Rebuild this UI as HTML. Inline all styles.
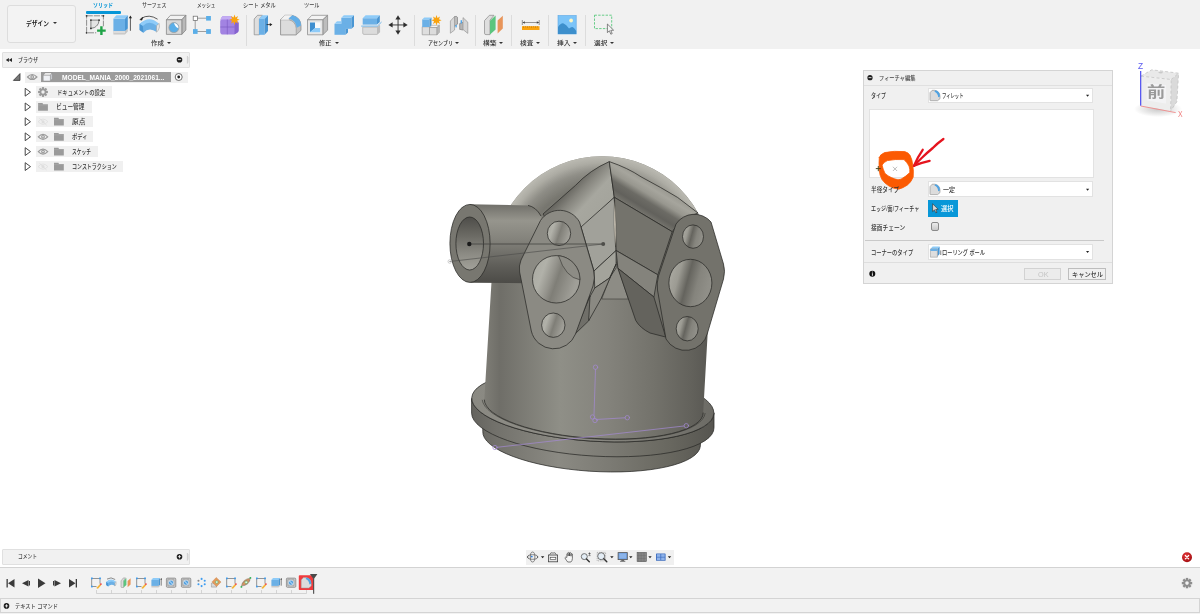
<!DOCTYPE html>
<html lang="ja"><head><meta charset="utf-8"><title>Fusion 360</title>
<style>
html,body{margin:0;padding:0;}
body{width:1200px;height:614px;overflow:hidden;background:#fff;position:relative;font-family:"Liberation Sans","Noto Sans CJK JP",sans-serif;}
.abs{position:absolute;}
.t{position:absolute;white-space:nowrap;transform-origin:0 50%;display:inline-block;}
#toolbar{position:absolute;left:0;top:0;width:1200px;height:49.4px;background:#f1f1f1;}
#design{position:absolute;left:7px;top:5px;width:67px;height:36px;border:1px solid #dddddd;border-radius:3px;background:#f3f3f3;}
.tabline{position:absolute;left:86.3px;top:11.4px;width:35.2px;height:2.2px;border-radius:1.1px;background:#0696d7;}
.vsep{position:absolute;top:15px;width:1px;height:31px;background:#dcdcdc;}
.arr{position:absolute;width:0;height:0;border-left:2px solid transparent;border-right:2px solid transparent;border-top:2.5px solid #333;}
.panelhdr{position:absolute;background:#f1f1f1;border:1px solid #e0e0e0;border-radius:1px;box-sizing:border-box;}
.rowbg{position:absolute;background:#f0f0f0;}
#dialog{position:absolute;left:863px;top:70px;width:250px;height:214.3px;background:#f0f0f0;border:1px solid #d4d4d4;box-sizing:border-box;}
.dd{position:absolute;background:#fff;border:1px solid #e2e2e2;box-sizing:border-box;}
.btn{position:absolute;background:#f0f0f0;border:1px solid #bdbdbd;box-sizing:border-box;}
#timeline{position:absolute;left:0;top:567px;width:1200px;height:47px;background:#f2f2f2;border-top:1.4px solid #d3d3d3;box-sizing:border-box;}
#textcmd{position:absolute;left:0;top:598px;width:1200px;height:15.2px;background:#f2f2f2;border:1px solid #d4d4d4;box-sizing:border-box;}

</style></head>
<body>
<div id="toolbar">
  <div id="design"></div>
  <div class="arr" style="left:53px;top:22px;"></div>
  <div class="tabline"></div>
  <div class="vsep" style="left:246px;"></div>
  <div class="vsep" style="left:414px;"></div>
  <div class="vsep" style="left:475px;"></div>
  <div class="vsep" style="left:511px;"></div>
  <div class="vsep" style="left:548px;"></div>
  <div class="vsep" style="left:585px;"></div>
  <div class="arr" style="left:166.5px;top:42px;"></div>
  <div class="arr" style="left:334.5px;top:42px;"></div>
  <div class="arr" style="left:455px;top:42px;"></div>
  <div class="arr" style="left:499px;top:42px;"></div>
  <div class="arr" style="left:535.5px;top:42px;"></div>
  <div class="arr" style="left:572.5px;top:42px;"></div>
  <div class="arr" style="left:609.5px;top:42px;"></div>
  <svg class="abs" style="left:0;top:0;pointer-events:none" width="640" height="49" viewBox="0 0 640 49">
<defs>
  <linearGradient id="tbBlueF" x1="0" y1="0" x2="0" y2="1"><stop offset="0" stop-color="#6fb4e8"/><stop offset="1" stop-color="#64abe2"/></linearGradient>
</defs>
<!-- sketch -->
<g>
  <rect x="86.6" y="15.8" width="16.8" height="17" fill="none" stroke="#5a5a5a" stroke-width="0.65" stroke-dasharray="6.2 1"/>
  <g fill="#333"><circle cx="86.6" cy="15.8" r="0.9"/><circle cx="103.4" cy="15.8" r="0.9"/><circle cx="86.6" cy="32.8" r="0.9"/></g>
  <path d="M90.9,20.1 L99.1,20.1 Q98.6,27.6 90.9,28.4 Z" fill="#e4e4e4" stroke="#555" stroke-width="0.7"/>
  <g fill="#333"><circle cx="90.9" cy="20.1" r="0.9"/><circle cx="99.1" cy="20.1" r="0.9"/><circle cx="90.9" cy="28.4" r="0.9"/></g>
  <rect x="96.2" y="26.4" width="10.6" height="8.6" fill="#f0f0f0"/>
  <path d="M100.2,26.3 h2.4 v3.1 h3.1 v2.4 h-3.1 v3.1 h-2.4 v-3.1 h-3.1 v-2.4 h3.1 Z" fill="#1fa347"/>
</g>
<!-- extrude -->
<g>
  <path d="M113.4,31 L125,31 L127.8,28.6 L127.8,31.6 L125,34.4 L113.4,34.4 Z" fill="#c6c6c6"/>
  <rect x="113.4" y="31" width="11.6" height="2.2" fill="#dcdcdc"/>
  <rect x="113.4" y="18.6" width="11.6" height="12.4" fill="#6bb0e6"/>
  <path d="M113.4,18.6 L116.4,15.3 L127.8,15.3 L125,18.6 Z" fill="#8ecbf8"/>
  <path d="M125,18.6 L127.8,15.3 L127.8,28.6 L125,31 Z" fill="#4a96d3"/>
  <line x1="130.4" y1="17.5" x2="130.4" y2="30.8" stroke="#333" stroke-width="0.8"/>
  <path d="M130.4,15.6 L132,18.2 L128.8,18.2 Z" fill="#222"/>
</g>
<!-- revolve -->
<g>
  <path d="M139.6,24 Q149,16.5 158.6,24 L156.8,32 Q149,26.5 143.4,32.8 L139.6,30 Z" fill="#6bb0e6"/>
  <path d="M139.6,24 Q149,14.5 158.8,23.6 L156.6,25.8 Q149,19.6 142.8,26 Z" fill="#8ecbf8"/>
  <path d="M139.6,24 L142.8,26 L143.4,32.8 L139.6,30 Z" fill="#4a96d3"/>
  <path d="M156.6,25.6 L159.2,23.4 Q160.2,27 158.2,30.6 L156.4,32.2 Z" fill="#e8e8e8" stroke="#999" stroke-width="0.5"/>
  <path d="M141.2,18.4 Q149,13.6 157.6,19.2" fill="none" stroke="#333" stroke-width="0.8"/>
  <path d="M139.8,19.6 L143,17.2 L141.8,20.2 Z" fill="#222" stroke="#222" stroke-width="0.5"/>
</g>
<!-- hole -->
<g stroke="#7d7d7d" stroke-width="0.7" stroke-linejoin="round">
  <path d="M166.4,19.8 L170.5,15.3 L185.9,15.3 L181.8,19.8 Z" fill="#f2f2f2"/>
  <path d="M181.8,19.8 L185.9,15.3 L185.9,30 L181.8,34.4 Z" fill="#b9b9b9"/>
  <rect x="166.4" y="19.8" width="15.4" height="14.6" fill="#d8d8d8"/>
  <circle cx="173.9" cy="27.6" r="5" fill="#5aaee8" stroke="#a0a0a0" stroke-width="0.8"/>
  <path d="M174,23 A4.6 4.6 0 0 1 178.4,28.2 Q175,27 174,23 Z" fill="#fff" stroke="none"/>
</g>
<!-- pattern -->
<g>
  <path d="M195.2,18.2 H208.5 M195.2,18.2 V31.5 M195.2,31.5 H208.5" fill="none" stroke="#7a7a7a" stroke-width="0.7"/>
  <rect x="193.2" y="16.2" width="4.2" height="4.2" fill="#fff" stroke="#666" stroke-width="0.7"/>
  <rect x="206.1" y="16" width="4.8" height="4.6" fill="#5aaee8"/>
  <rect x="193" y="29.1" width="4.6" height="4.8" fill="#5aaee8"/>
  <rect x="206.1" y="29.1" width="4.8" height="4.8" fill="#5aaee8"/>
</g>
<!-- form -->
<g>
  <path d="M222.5,16.2 H231 L238.6,22 V30.5 Q238.6,32 236.8,33 L234,34.6 H223 Q220.2,34.6 220.2,31.8 V21.5 Q220.2,18 222.5,16.2 Z" fill="#a283e2"/>
  <path d="M222.5,16.2 H231.5 L233.5,19.5 H222 Q220.6,19.5 220.3,21 Q220.4,17.8 222.5,16.2 Z" fill="#c3acf3"/>
  <path d="M234.5,21 L238.6,23 V30.5 Q238.6,32 236.8,33 L234.5,34.4 Z" fill="#8663cf"/>
  <path d="M227.3,19.5 V34.4 M220.3,27 H234.5" stroke="#7a58c0" stroke-width="0.6" fill="none"/>
  <path d="M234.5,14.6 L235.5,17.6 L238,16 L237,18.8 L239.6,19.8 L237,20.8 L238,23.6 L235.5,22 L234.5,25 L233.5,22 L231,23.6 L232,20.8 L229.4,19.8 L232,18.8 L231,16 L233.5,17.6 Z" fill="#f9a30f"/>
</g>
<!-- press pull -->
<g>
  <path d="M254.2,19 L257.5,15.3 L262.5,15.3 L259.4,19 L259.4,34.8 L254.2,34.8 Z" fill="#dedede" stroke="#8a8a8a" stroke-width="0.7" stroke-linejoin="round"/>
  <rect x="259" y="19" width="5.6" height="15.8" fill="#6bb0e6"/>
  <path d="M259,19 L262.2,15.3 L268,15.3 L264.6,19 Z" fill="#8ecbf8"/>
  <path d="M264.6,19 L268,15.3 L268,31 L264.6,34.8 Z" fill="#4a96d3"/>
  <line x1="266.6" y1="24.6" x2="270.6" y2="24.6" stroke="#222" stroke-width="0.8"/>
  <path d="M272.4,24.6 L269.8,23 L269.8,26.2 Z" fill="#222"/>
</g>
<!-- fillet -->
<g stroke-linejoin="round">
  <path d="M280.6,19.5 L284.8,15.3 L292,15.3 Q300.8,17.5 301,25.5 L301,30.4 L296.2,34.8 L280.6,34.8 Z" fill="#c2c2c2" stroke="#858585" stroke-width="0.7"/>
  <path d="M280.6,19.8 L289,19.8 Q295.8,21.5 296.2,28.5 L296.2,34.8 L280.6,34.8 Z" fill="#dcdcdc" stroke="#858585" stroke-width="0.5"/>
  <path d="M280.6,19.8 L284.8,15.3 L292.4,15.3 L288.6,18.6 L289,19.8 Z" fill="#f2f2f2"/>
  <path d="M288.6,18.6 L292.4,15.3 Q300.6,17.4 301,25.4 L296.8,27.8 Q296,20.6 288.6,18.6 Z" fill="#62aee8"/>
</g>
<!-- shell -->
<g stroke="#858585" stroke-width="0.7" stroke-linejoin="round">
  <path d="M307.5,19.8 L311.8,15.3 L327.6,15.3 L322.8,19.8 Z" fill="#f4f4f4"/>
  <path d="M322.8,19.8 L327.6,15.3 L327.6,30.2 L322.8,34.8 Z" fill="#bdbdbd"/>
  <rect x="307.5" y="19.8" width="15.3" height="15" fill="#e6e6e6"/>
  <rect x="310" y="22.4" width="10.4" height="10" fill="#fafafa" stroke="none"/>
  <path d="M310,22.6 L315,22.6 L315,28.2 L310,32.2 Z" fill="#3f8fd0" stroke="none"/>
  <path d="M310,32.2 L315,28 L320.2,28 L320.2,32.2 Z" fill="#8ecbf8" stroke="none"/>
</g>
<!-- combine -->
<g>
  <rect x="341.3" y="17.8" width="10.2" height="11" fill="#6bb0e6"/>
  <path d="M341.3,17.8 L343.8,15.3 L354,15.3 L351.5,17.8 Z" fill="#8ecbf8"/>
  <path d="M351.5,17.8 L354,15.3 L354,26.4 L351.5,28.8 Z" fill="#4a96d3"/>
  <rect x="334.5" y="23.8" width="11" height="11" fill="#6bb0e6"/>
  <path d="M334.5,23.8 L337,21.3 L341.3,21.3 L341.3,23.8 Z" fill="#8ecbf8"/>
  <path d="M345.5,28.8 L348,28.8 L348,32.4 L345.5,34.8 Z" fill="#4a96d3"/>
</g>
<!-- split -->
<g>
  <path d="M362.7,27.2 L377,27.2 L379.6,25.4 L379.6,32.2 L377,34.4 L364,34.4 Q362.7,34.4 362.7,33 Z" fill="#dcdcdc" stroke="#a5a5a5" stroke-width="0.6"/>
  <path d="M377,27.2 L379.6,25.4 L379.6,32.2 L377,34.4 Z" fill="#bdbdbd"/>
  <rect x="362.7" y="18.2" width="14.3" height="6.4" fill="#6bb0e6"/>
  <path d="M362.7,18.2 L365.6,15.3 L379.8,15.3 L377,18.2 Z" fill="#8ecbf8"/>
  <path d="M377,18.2 L379.8,15.3 L379.8,22 L377,24.6 Z" fill="#4a96d3"/>
  <path d="M361.2,26.1 L377.4,26.1 L381.6,22" fill="none" stroke="#62aee8" stroke-width="0.9"/>
</g>
<!-- move -->
<g fill="#2e2e2e">
  <rect x="397.6" y="17.5" width="0.9" height="15" />
  <rect x="390.5" y="24.5" width="15" height="0.9" />
  <path d="M398,15.3 L400.6,19.4 L395.4,19.4 Z"/>
  <path d="M398,34.8 L400.6,30.6 L395.4,30.6 Z"/>
  <path d="M388.4,24.9 L392.6,22.3 L392.6,27.5 Z"/>
  <path d="M407.7,24.9 L403.4,22.3 L403.4,27.5 Z"/>
</g>
<!-- assembly -->
<g stroke-linejoin="round">
  <path d="M422.2,26.8 L429.5,26.8 L429.5,34.8 L422.2,34.8 Z" fill="#dedede" stroke="#909090" stroke-width="0.6"/>
  <path d="M429.5,27.5 L432,25.3 L439.4,25.3 L437,27.5 Z" fill="#f2f2f2" stroke="#909090" stroke-width="0.5"/>
  <path d="M429.5,27.5 L437,27.5 L437,34.8 L429.5,34.8 Z" fill="#dcdcdc" stroke="#909090" stroke-width="0.6"/>
  <path d="M437,27.5 L439.4,25.3 L439.4,32.4 L437,34.8 Z" fill="#b9b9b9" stroke="#909090" stroke-width="0.5"/>
  <rect x="422.2" y="19.4" width="7.3" height="7.6" fill="#6bb0e6"/>
  <path d="M422.2,19.4 L424.2,17.5 L431.5,17.5 L429.5,19.4 Z" fill="#8ecbf8"/>
  <path d="M429.5,19.4 L431.5,17.5 L431.5,25.2 L429.5,27 Z" fill="#4a96d3"/>
  <path d="M436.5,15 L437.5,18 L440,16.4 L439,19.2 L441.6,20.2 L439,21.2 L440,24 L437.5,22.4 L436.5,25.4 L435.5,22.4 L433,24 L434,21.2 L431.4,20.2 L434,19.2 L433,16.4 L435.5,18 Z" fill="#f9a30f" stroke="none"/>
</g>
<!-- joint -->
<g stroke="#8a8a8a" stroke-width="0.6" stroke-linejoin="round">
  <path d="M450.4,21 L454.5,16.6 Q456.5,15.8 457.5,17.4 L457.5,24 L454.6,26 L454.6,30 L450.4,33.2 Z" fill="#d9d9d9"/>
  <path d="M454.5,16.6 Q456.5,15.8 457.5,17.4 L457.5,24 L454.6,26 Z" fill="#bcbcbc"/>
  <path d="M463,17.6 L467.8,22.2 L467.8,33.4 L463.6,30 L459.8,29.4 L459.8,23.6 L463,22.4 Z" fill="#d4d4d4"/>
  <path d="M459.8,23.6 L463,22.4 L463,29.8 L459.8,29.4 Z" fill="#b5b5b5"/>
  <rect x="455.4" y="25" width="1.4" height="2.4" fill="#4fa6ea" stroke="none"/>
  <rect x="460.6" y="20.2" width="1.4" height="3.2" fill="#4fa6ea" stroke="none"/>
</g>
<!-- construct -->
<g stroke-linejoin="round">
  <path d="M484.5,20.6 L489.4,15.3 L494,15.3 L490,20.2 L490,34.6 L486,34.6 Q484.5,34.6 484.5,33.2 Z" fill="#dedede" stroke="#8a8a8a" stroke-width="0.7"/>
  <path d="M490,20.8 L495.6,15.6 L495.6,29.6 L490,34.6 Z" fill="#5cc57e"/>
  <path d="M497.6,20.4 L502.8,15.8 L502.8,28.6 L497.6,33.4 Z" fill="#e8955a"/>
</g>
<!-- inspect -->
<g>
  <rect x="522" y="26.2" width="17.5" height="3.8" fill="#f9a30f"/>
  <path d="M523.5,26.2 v1.6 M525.5,26.2 v1.2 M527.5,26.2 v1.6 M529.5,26.2 v1.2 M531.5,26.2 v1.6 M533.5,26.2 v1.2 M535.5,26.2 v1.6 M537.5,26.2 v1.2" stroke="#b36b00" stroke-width="0.5"/>
  <path d="M522.3,20 v5 M539.2,20 v5 M522.8,22.5 H538.8" stroke="#555" stroke-width="0.6" fill="none"/>
  <path d="M522.6,22.5 l2.2,-1.2 v2.4 Z M539,22.5 l-2.2,-1.2 v2.4 Z" fill="#444"/>
</g>
<!-- insert -->
<g>
  <rect x="558" y="15.5" width="18.2" height="18.5" fill="#7cc4f8" stroke="#5aa7e4" stroke-width="0.6"/>
  <path d="M558,27 Q561,22.6 563.6,23.4 Q566.2,24.4 569,28.6 Q571.4,26.4 573,27.2 Q574.8,28.4 576.2,31 L576.2,34 L558,34 Z" fill="#3d8fcc"/>
  <circle cx="571.1" cy="20.5" r="1.9" fill="#fdf6c4"/>
</g>
<!-- select -->
<g>
  <rect x="594.5" y="15.2" width="17.2" height="13.4" fill="none" stroke="#46c46e" stroke-width="0.8" stroke-dasharray="2.4 1.3"/>
  <path d="M607.4,24 L607.4,32.6 L609.4,30.8 L610.8,34.2 L612.2,33.6 L610.8,30.4 L613.6,30.2 Z" fill="#f4f4f4" stroke="#555" stroke-width="0.7" stroke-linejoin="round"/>
</g>
</svg>

</div>
<!-- browser -->
<div class="panelhdr" style="left:2px;top:52px;width:188px;height:15.5px;"></div>
<div class="rowbg" style="left:25px;top:71.7px;width:162.5px;height:11px;"></div>
<div class="abs" style="left:40.7px;top:72.4px;width:130.3px;height:9.4px;background:#9b9b9b;"></div>
<div class="rowbg" style="left:36.3px;top:86.3px;width:75.7px;height:11.6px;"></div>
<div class="rowbg" style="left:36.3px;top:101px;width:56px;height:11.6px;"></div>
<div class="rowbg" style="left:36.3px;top:115.9px;width:56.7px;height:11.6px;"></div>
<div class="rowbg" style="left:36.3px;top:130.9px;width:56.7px;height:11.6px;"></div>
<div class="rowbg" style="left:36.3px;top:145.8px;width:61.5px;height:11.6px;"></div>
<div class="rowbg" style="left:36.3px;top:160.8px;width:86.5px;height:11.6px;"></div>
<svg class="abs" style="left:0;top:0;pointer-events:none" width="1200" height="614" viewBox="0 0 1200 614">
<defs>
  <linearGradient id="gBody" x1="484" y1="0" x2="708" y2="0" gradientUnits="userSpaceOnUse">
    <stop offset="0" stop-color="#7f7e77"/><stop offset="0.07" stop-color="#6f6e68"/>
    <stop offset="0.34" stop-color="#8f8f87"/><stop offset="0.55" stop-color="#84837c"/>
    <stop offset="0.76" stop-color="#73726b"/><stop offset="0.93" stop-color="#62615b"/>
    <stop offset="1" stop-color="#595853"/>
  </linearGradient>
  <linearGradient id="gRing" x1="471" y1="0" x2="714" y2="0" gradientUnits="userSpaceOnUse">
    <stop offset="0" stop-color="#64635e"/><stop offset="0.10" stop-color="#72716b"/>
    <stop offset="0.36" stop-color="#8b8a83"/><stop offset="0.58" stop-color="#7b7a73"/>
    <stop offset="0.82" stop-color="#68675f"/><stop offset="1" stop-color="#565550"/>
  </linearGradient>
  <linearGradient id="gTopFace" x1="471" y1="0" x2="714" y2="0" gradientUnits="userSpaceOnUse">
    <stop offset="0" stop-color="#8a8982"/><stop offset="0.4" stop-color="#8f8e87"/>
    <stop offset="1" stop-color="#6c6b65"/>
  </linearGradient>
  <radialGradient id="gDome" cx="602" cy="265.6" r="109.5" gradientUnits="userSpaceOnUse">
    <stop offset="0" stop-color="#7a7972" stop-opacity="0"/><stop offset="0.5" stop-color="#7a7972" stop-opacity="0.2"/>
    <stop offset="0.74" stop-color="#74736c" stop-opacity="0.9"/>
    <stop offset="0.86" stop-color="#8f8e87" stop-opacity="0.95"/>
    <stop offset="0.94" stop-color="#adaca4" stop-opacity="1"/>
    <stop offset="1" stop-color="#bbbab2" stop-opacity="1"/>
  </radialGradient>
  <linearGradient id="gDomeFade" x1="0" y1="150" x2="0" y2="275" gradientUnits="userSpaceOnUse">
    <stop offset="0" stop-color="#fff"/><stop offset="0.45" stop-color="#fff"/><stop offset="0.85" stop-color="#000"/>
  </linearGradient>
  <mask id="mDome"><rect x="480" y="150" width="240" height="125" fill="url(#gDomeFade)"/></mask>
  <linearGradient id="gPipe" x1="0" y1="205" x2="0" y2="283" gradientUnits="userSpaceOnUse">
    <stop offset="0" stop-color="#72716b"/><stop offset="0.2" stop-color="#96958d"/>
    <stop offset="0.45" stop-color="#83827b"/><stop offset="0.78" stop-color="#5f5e59"/>
    <stop offset="1" stop-color="#4c4b47"/>
  </linearGradient>
  <linearGradient id="gPipeIn" x1="0" y1="217" x2="0" y2="270" gradientUnits="userSpaceOnUse">
    <stop offset="0" stop-color="#4e4d49"/><stop offset="0.35" stop-color="#6b6a64"/>
    <stop offset="0.7" stop-color="#8c8b84"/><stop offset="1" stop-color="#a3a29a"/>
  </linearGradient>
  <linearGradient id="gHole" x1="0" y1="0" x2="1" y2="0.35">
    <stop offset="0" stop-color="#a9a9a1"/><stop offset="0.3" stop-color="#b1b1a9"/><stop offset="0.5" stop-color="#94938c"/>
    <stop offset="0.62" stop-color="#7f7e77"/><stop offset="1" stop-color="#a09f98"/>
  </linearGradient>
  <linearGradient id="gHoleR" x1="0" y1="0" x2="1" y2="0.3">
    <stop offset="0" stop-color="#b0afa7"/><stop offset="0.3" stop-color="#9c9b93"/>
    <stop offset="0.52" stop-color="#65645e"/><stop offset="0.75" stop-color="#85847d"/><stop offset="1" stop-color="#908f88"/>
  </linearGradient>
  <linearGradient id="gArmLT" x1="571" y1="188" x2="600" y2="215" gradientUnits="userSpaceOnUse">
    <stop offset="0" stop-color="#696862"/><stop offset="0.22" stop-color="#85847d"/><stop offset="0.55" stop-color="#a7a79f"/><stop offset="1" stop-color="#a4a49c"/>
  </linearGradient>
  <linearGradient id="gArmRT" x1="640" y1="213" x2="657" y2="185" gradientUnits="userSpaceOnUse">
    <stop offset="0" stop-color="#77766f"/><stop offset="0.2" stop-color="#62615c"/><stop offset="0.42" stop-color="#6c6b65"/><stop offset="0.62" stop-color="#98978f"/><stop offset="0.82" stop-color="#a6a59d"/><stop offset="1" stop-color="#9a9991"/>
  </linearGradient>
</defs>
<g stroke="#2a2a27" stroke-width="0.75" stroke-linejoin="round">
  <!-- lower ring -->
  <path d="M482.8,418 L482.8,431.3 A109 32.7 3.8 0 0 700.4,445.8 L700.4,425 Z" fill="url(#gRing)"/>
  <!-- flange side -->
  <path d="M471.6,398.4 L471.6,413.2 A121.3 35.5 3.8 0 0 714,427.6 L714,412.8 A121.3 35.5 3.8 0 1 471.6,398.4 Z" fill="url(#gRing)"/>
  <!-- flange top face -->
  <ellipse cx="592.8" cy="405.6" rx="121.3" ry="35.5" transform="rotate(3.8 592.8 405.6)" fill="url(#gTopFace)"/>
  <!-- body + dome -->
  <path d="M484.3,399.6 L492.5,265.6 A109.5 109.5 0 0 1 711.5,265.6 L703.2,412.6 A109.5 32.2 3.8 0 1 484.3,399.6 Z" fill="url(#gBody)" stroke="none"/>
  <path d="M703.2,412.6 A109.5 32.2 3.8 0 1 484.3,399.6" fill="none"/>
  <path d="M492.5,265.6 A109.5 109.5 0 0 1 711.5,265.6 Z" fill="url(#gDome)" stroke="none" mask="url(#mDome)"/>
  <path d="M482.2,399.8 A111.8 33.6 3.8 0 0 705.2,413" fill="none" stroke-width="0.5"/>
</g>

<!-- PIPE -->
<g stroke="#2a2a27" stroke-width="0.75" stroke-linejoin="round">
  <path d="M470,204.2 L528,205.4 Q536,207 541,216 L545,230 L526,283.2 L470.5,282.7 Z" fill="url(#gPipe)" stroke="none"/>
  <path d="M528,205.4 Q536,207 541,216" fill="none"/>
  <ellipse cx="470" cy="243.4" rx="20.1" ry="39" fill="#787770"/>
  <ellipse cx="469.7" cy="243.5" rx="13.8" ry="26.5" fill="url(#gPipeIn)"/>
</g>
<!-- ARMS -->
<g stroke="#2a2a27" stroke-width="0.75" stroke-linejoin="round">
  <!-- gap between arms -->
  <path d="M616.1,261.7 L601.7,299 L628.4,299 Z" fill="#8d8c85" stroke-width="0.5"/>
  <!-- left arm top face -->
  <path d="M609.3,161.6 Q590,170 575.6,185.3 L543,214 L560,240 L582,229 L614.3,197.3 Z" fill="url(#gArmLT)"/>
  <!-- left arm middle face -->
  <path d="M614.3,197.3 L616.1,250.5 L594,271 L581,227 Z" fill="#a1a19a"/>
  <!-- left arm lower face -->
  <path d="M616.1,250.5 L616.1,268 L609.5,278 L594.8,288 L594,271 Z" fill="#a3a39b"/>
  <!-- left arm bottom -->
  <path d="M594.8,288 L609.5,278 L616.1,264 L600.9,299 L588.7,320.8 L587.5,301 Z" fill="#8a8982"/>
  <path d="M588.7,320.8 L574,335 L590,296 Z" fill="#706f69"/>
  <!-- right arm top face -->
  <path d="M609.3,161.6 Q628,168 641,176.8 Q662,188 677.7,197.5 L698,213 L682,219 L672.2,231.7 L614.3,197.3 Z" fill="url(#gArmRT)"/>
  <!-- right arm middle -->
  <path d="M614.3,197.3 L672.2,231.7 L657.8,274.8 L616.1,250.5 Z" fill="#74736c"/>
  <!-- right arm lower -->
  <path d="M616.1,250.5 L657.8,274.8 L653.9,297 L617.9,268.3 Z" fill="#84837c"/>
  <!-- right arm bottom -->
  <path d="M617.9,268.3 L653.9,297 L665.7,337 L650,333 Q640,328 635.7,320.4 L628.4,299 Z" fill="#64635d"/>
  <!-- crease sliver -->
  <path d="M614.6,200 Q612.8,225 615.6,247 Q616.8,225 614.6,200 Z" fill="#cfc8ba" stroke-width="0.3"/>
</g>
<!-- LEFT FLANGE -->
<g stroke="#2a2a27" stroke-width="0.75" stroke-linejoin="round">
  <path d="M540.5,220.5 A22.9 22.9 0 0 1 579.5,222 L593.5,270 Q595.5,278 593,286 L575.5,334 A23.2 23.2 0 0 1 531.3,331 L519.6,272 Q518.6,266 521,260 Z" fill="#8b8a83"/>
  <ellipse cx="559" cy="233.4" rx="11.7" ry="12.2" fill="url(#gHole)"/>
  <ellipse cx="556.2" cy="279.3" rx="23.7" ry="23.7" fill="url(#gHole)"/>
  <path d="M558.5,255.7 A23.7 23.7 0 0 1 579.9,279.8 Q565.5,277.5 558.5,255.7 Z" fill="#8d8c85" stroke-width="0.55"/>
  <ellipse cx="553.3" cy="325.2" rx="11.7" ry="12.2" fill="url(#gHole)"/>
</g>
<!-- RIGHT FLANGE -->
<g stroke="#2a2a27" stroke-width="0.75" stroke-linejoin="round">
  <path d="M676,224 A22 22 0 0 1 711,222 L723.5,264 Q725.5,271 723.5,279 L707.5,333 A22.5 22.5 0 0 1 666,339 L657.5,290 Q656.5,283 658.5,276 Z" fill="#73726b"/>
  <ellipse cx="693" cy="236.6" rx="10.5" ry="11.7" fill="url(#gHoleR)"/>
  <ellipse cx="690.4" cy="283" rx="21.5" ry="23.7" fill="url(#gHoleR)"/>
  <ellipse cx="687.2" cy="328.7" rx="11" ry="12.2" fill="url(#gHoleR)"/>
</g>
<!-- SKETCH / AXIS -->
<g fill="none" stroke-linecap="round">
  <line x1="469.3" y1="244" x2="603.2" y2="244" stroke="#3a3a38" stroke-width="0.7"/>
  <line x1="449.8" y1="261.5" x2="603.2" y2="244" stroke="#4a4a48" stroke-width="0.6"/>
  <circle cx="469.3" cy="244" r="2.2" fill="#1a1a1a" stroke="none"/>
  <circle cx="603.2" cy="244" r="2" fill="#4e4e4a" stroke="none"/>
  <circle cx="449.8" cy="261.5" r="1.8" stroke="#b0b0b0" stroke-width="0.6"/>
  <g stroke="#a58ad6" stroke-width="0.7">
    <line x1="595.5" y1="369.5" x2="594" y2="415"/>
    <line x1="596" y1="419.5" x2="625" y2="417.8"/>
    <line x1="497" y1="447.3" x2="684" y2="426"/>
    <circle cx="595.5" cy="367.2" r="2.2"/>
    <circle cx="592.5" cy="417" r="2.2"/>
    <circle cx="595" cy="420.5" r="2.2"/>
    <circle cx="627.3" cy="417.7" r="2.2"/>
    <circle cx="686.3" cy="425.7" r="2.2"/>
    <circle cx="495" cy="447.5" r="2.2"/>
  </g>
</g>
</svg>

<!-- dialog -->
<div id="dialog">
  <div class="abs" style="left:0;top:14.2px;width:248px;height:1.2px;background:#e0e0e0;"></div>
  <div class="dd" style="left:64.3px;top:16.7px;width:164.4px;height:15.8px;"></div>
  <div class="dd" style="left:5.2px;top:37.7px;width:224.6px;height:69.6px;"></div>
  <div class="dd" style="left:64.3px;top:110px;width:164.4px;height:16px;"></div>
  <div class="abs" style="left:63.9px;top:128.9px;width:30.4px;height:16.7px;background:#0897d8;"></div>
  <div class="abs" style="left:67px;top:151.1px;width:8px;height:8.5px;border:1px solid #8a8a8a;border-radius:2px;background:linear-gradient(#ececec,#c9c9c9);box-sizing:border-box;"></div>
  <div class="abs" style="left:0.8px;top:168.8px;width:239px;height:1.3px;background:#c9c9c9;"></div>
  <div class="dd" style="left:64.3px;top:172.7px;width:164.4px;height:16.2px;"></div>
  <div class="abs" style="left:0;top:191px;width:248px;height:1px;background:#dedede;"></div>
  <div class="btn" style="left:160.2px;top:196.5px;width:37.3px;height:12px;border-color:#d2d2d2;background:#ececec;"></div>
  <div class="btn" style="left:204.4px;top:196.5px;width:37.6px;height:12px;"></div>
</div>
<!-- bottom -->
<div class="panelhdr" style="left:2px;top:549px;width:188px;height:15.5px;"></div>
<div class="abs" style="left:526px;top:549.5px;width:148px;height:15px;background:#f0f0f0;"></div>
<div id="timeline"></div>
<div id="textcmd"></div>

<svg class="abs" style="left:0;top:0;pointer-events:none" width="1200" height="614" viewBox="0 0 1200 614">
<defs>
<g id="icEye"><path d="M-4.7,0 Q0,-5 4.7,0 Q0,5 -4.7,0 Z" fill="none" stroke-width="1.15"/><circle r="1.9" stroke="none"/><circle r="0.75" fill="#f0f0f0" stroke="none"/></g>
<g id="icEyeOff"><path d="M-4.9,0 Q0,-5.2 4.9,0 Q0,5.2 -4.9,0 Z" fill="none" stroke-width="0.8"/><circle r="1.5" stroke="none"/><line x1="-3.6" y1="-3.4" x2="3.6" y2="3.4" stroke-width="0.9"/></g>
<g id="icFolder"><path d="M0,0 H4.4 L5,1.2 H9.8 V7.8 H0 Z" fill="#9a9a9a"/><path d="M0,2 H9.8" stroke="#b8b8b8" stroke-width="0.4"/></g>
<g id="icTri"><path d="M0,0 L5.3,3.9 L0,7.8 Z" fill="none" stroke="#3e3e3e" stroke-width="0.95" stroke-linejoin="round"/></g>
<g id="tlSketch">
  <rect x="-4.2" y="-4.2" width="8.2" height="8.2" fill="none" stroke="#555" stroke-width="0.6"/>
  <g fill="#3f9df0"><rect x="-5" y="-5" width="1.7" height="1.7"/><rect x="3.2" y="-5" width="1.7" height="1.7"/><rect x="-5" y="3.2" width="1.7" height="1.7"/></g>
  <rect x="0.5" y="1.2" width="6" height="5" fill="#f2f2f2"/>
  <path d="M1,4.8 L4,1.6 L5.2,2.8 L2.2,5.9 L0.7,6.2 Z" fill="#f5b335"/>
  <circle cx="4.9" cy="1.6" r="0.9" fill="#ef3b3b"/>
</g>
<g id="tlExtrude">
  <path d="M-4.6,3.2 H2.4 L4,1.8 V3.4 L2.4,5 H-4.6 Z" fill="#c9c9c9"/>
  <rect x="-4.6" y="-2.6" width="7" height="6" fill="#6bb0e6"/>
  <path d="M-4.6,-2.6 L-3,-4.4 H4 L2.4,-2.6 Z" fill="#8ecbf8"/>
  <path d="M2.4,-2.6 L4,-4.4 V1.8 L2.4,3.4 Z" fill="#4a96d3"/>
  <line x1="5.2" y1="-3.4" x2="5.2" y2="3.2" stroke="#333" stroke-width="0.6"/>
  <path d="M5.2,-4.6 L6.1,-3 L4.3,-3 Z" fill="#222"/>
</g>
<g id="tlHole">
  <rect x="-4.6" y="-4.4" width="9.4" height="9.2" rx="1" fill="#cfcfcf" stroke="#7a7a7a" stroke-width="0.7"/>
  <rect x="-3.4" y="-3.2" width="6.6" height="6.6" rx="0.6" fill="#bdbdbd" stroke="#8a8a8a" stroke-width="0.4"/>
  <circle cx="0" cy="0.2" r="2.6" fill="#4f9fe0" stroke="#e8e8e8" stroke-width="0.7"/>
  <path d="M-1.6,-1.6 L1.8,1.9" stroke="#dff0ff" stroke-width="0.9"/>
</g>
<g id="tlRevolve">
  <path d="M-4.8,-0.6 Q0,-4.4 4.8,-0.6 L4,3.4 Q0,0.8 -2.8,4 L-4.8,2.6 Z" fill="#6bb0e6"/>
  <path d="M-4.8,-0.6 Q0,-5.2 4.9,-0.8 L3.8,0.4 Q0,-2.6 -3.2,0.6 Z" fill="#8ecbf8"/>
  <path d="M-4.8,-0.6 L-3.2,0.6 L-2.8,4 L-4.8,2.6 Z" fill="#4a96d3"/>
  <path d="M3.8,0.4 L5,-0.8 Q5.6,1.2 4.6,2.9 L3.8,3.5 Z" fill="#e4e4e4" stroke="#999" stroke-width="0.4"/>
  <path d="M-4,-3.4 Q0,-6 4.2,-3" fill="none" stroke="#444" stroke-width="0.6"/>
</g>
<g id="tlConstruct">
  <path d="M-5,-1.6 L-2.6,-4.6 H-0.4 L-2.4,-1.8 V5 H-4.3 Q-5,5 -5,4.3 Z" fill="#dcdcdc" stroke="#8a8a8a" stroke-width="0.5"/>
  <path d="M-2.4,-1.6 L0.4,-4.4 V2.4 L-2.4,5 Z" fill="#5cc57e"/>
  <path d="M1.6,-1.4 L4.6,-4.2 V2 L1.6,4.8 Z" fill="#e8955a"/>
</g>
<g id="navArr"><path d="M-1.7,-0.9 H1.7 L0,1.1 Z" fill="#222"/></g>
</defs>
<g>
<path d="M5.8,60 L8.9,58 V62 Z M8.8,60 L12,58 V62 Z" fill="#2a2a2a"/>
<circle cx="179.5" cy="59.7" r="2.8" fill="#1e1e1e"/><rect x="177.9" y="59.3" width="3.2" height="0.8" fill="#fff"/>
<path d="M187.4,56 V63.5" stroke="#c4c4c4" stroke-width="0.8"/><path d="M188.6,57 V62.5" stroke="#d4d4d4" stroke-width="0.6"/>
<path d="M13.4,80.4 H20 V73.6 Z" fill="#7a7a7a" stroke="#333" stroke-width="0.8" stroke-linejoin="round"/>
<g transform="translate(32.2 77)" fill="#9a9a9a" stroke="#9a9a9a"><use href="#icEye"/></g>
<g stroke="#8c8c8c" stroke-width="0.5" stroke-linejoin="round"><path d="M43.2,75.2 L45.2,72.9 H52.2 L50.4,75.2 Z" fill="#fff"/><path d="M50.4,75.2 L52.2,72.9 V78.8 L50.4,81 Z" fill="#cfd3da"/><rect x="43.2" y="75.2" width="7.2" height="5.8" rx="0.8" fill="#eef0f4"/></g>
<circle cx="178.7" cy="77" r="3.5" fill="#fff" stroke="#333" stroke-width="0.7"/><circle cx="178.7" cy="77" r="1.4" fill="#222"/>
<use href="#icTri" x="25.2" y="88.3"/>
<use href="#icTri" x="25.2" y="103.0"/>
<use href="#icTri" x="25.2" y="117.8"/>
<use href="#icTri" x="25.2" y="132.9"/>
<use href="#icTri" x="25.2" y="147.7"/>
<use href="#icTri" x="25.2" y="162.7"/>
<g transform="translate(43 92)" fill="#9a9a9a"><rect x="-1.1" y="-4.9" width="2.2" height="2.6" transform="rotate(0)"/><rect x="-1.1" y="-4.9" width="2.2" height="2.6" transform="rotate(45)"/><rect x="-1.1" y="-4.9" width="2.2" height="2.6" transform="rotate(90)"/><rect x="-1.1" y="-4.9" width="2.2" height="2.6" transform="rotate(135)"/><rect x="-1.1" y="-4.9" width="2.2" height="2.6" transform="rotate(180)"/><rect x="-1.1" y="-4.9" width="2.2" height="2.6" transform="rotate(225)"/><rect x="-1.1" y="-4.9" width="2.2" height="2.6" transform="rotate(270)"/><rect x="-1.1" y="-4.9" width="2.2" height="2.6" transform="rotate(315)"/><circle r="3.4"/><circle r="1.7" fill="#f0f0f0"/></g>
<use href="#icFolder" x="38.1" y="103"/>
<use href="#icFolder" x="54" y="117.8"/>
<use href="#icFolder" x="54" y="132.9"/>
<use href="#icFolder" x="54" y="147.7"/>
<use href="#icFolder" x="54" y="162.7"/>
<g transform="translate(43 121.7)" fill="#dedede" stroke="#dedede"><use href="#icEyeOff"/></g>
<g transform="translate(43 136.8)" fill="#9a9a9a" stroke="#9a9a9a"><use href="#icEye"/></g>
<g transform="translate(43 151.6)" fill="#9a9a9a" stroke="#9a9a9a"><use href="#icEye"/></g>
<g transform="translate(43 166.6)" fill="#dedede" stroke="#dedede"><use href="#icEyeOff"/></g>
</g>
<circle cx="179.5" cy="556.7" r="2.8" fill="#1e1e1e"/><path d="M177.9,556.7 H181.1 M179.5,555.1 V558.3" stroke="#fff" stroke-width="0.8"/>
<path d="M187.4,553 V560.5" stroke="#c4c4c4" stroke-width="0.8"/><path d="M188.6,554 V559.5" stroke="#d4d4d4" stroke-width="0.6"/>
<g>
<circle cx="870" cy="77.7" r="2.6" fill="#1e1e1e"/><rect x="868.5" y="77.3" width="3" height="0.8" fill="#fff"/>
<g transform="translate(930 90.3)" stroke-linejoin="round"><path d="M0,2.4 L2.2,0 H5 Q9.8,1 10,6 V8.4 L7.6,10.4 H0.6 Q0,10.4 0,9.8 Z" fill="#dcdcdc" stroke="#8a8a8a" stroke-width="0.6"/><path d="M4.4,1.4 L5.4,0 Q9.8,1 10,6.2 L8.2,7 Q7.8,2.6 4.4,1.4 Z" fill="#4fa3e3"/></g>
<g transform="translate(930 184.2)" stroke-linejoin="round"><path d="M0,2.4 L2.2,0 H5 Q9.8,1 10,6 V8.4 L7.6,10.4 H0.6 Q0,10.4 0,9.8 Z" fill="#dcdcdc" stroke="#8a8a8a" stroke-width="0.6"/><path d="M4.4,1.4 L5.4,0 Q9.8,1 10,6.2 L8.2,7 Q7.8,2.6 4.4,1.4 Z" fill="#4fa3e3"/></g>
<path d="M1086,94.69999999999999 h3.2 l-1.6,2 Z" fill="#222"/>
<path d="M1086,188.7 h3.2 l-1.6,2 Z" fill="#222"/>
<path d="M1086,251.1 h3.2 l-1.6,2 Z" fill="#222"/>
<path d="M892.9,166.8 L897.1,171 M897.1,166.8 L892.9,171" stroke="#9c9c9c" stroke-width="0.65"/>
<path d="M932.6,203.8 V211.6 L934.5,209.9 L935.8,212.8 L937,212.3 L935.7,209.5 L938.2,209.3 Z" fill="#d8d8d8" stroke="#2a2a2a" stroke-width="0.6" stroke-linejoin="round"/>
<g stroke-linejoin="round"><path d="M930.4,249 L932.6,246.6 H939.6 L937.4,249 Z" fill="#8ecbf8"/><path d="M937.4,249 L939.6,246.6 V254 L937.4,256.4 Z" fill="#4a96d3"/><rect x="930.4" y="249" width="7" height="8.2" fill="#dedede" stroke="#8a8a8a" stroke-width="0.5"/><path d="M930.4,249 H937.4 V251 H930.4 Z" fill="#6bb0e6"/><rect x="940.4" y="250.4" width="0.8" height="4.6" fill="#666"/></g>
<circle cx="872.3" cy="273.8" r="3" fill="#111"/><rect x="871.9" y="273.2" width="0.9" height="2.6" fill="#fff"/><rect x="871.9" y="271.6" width="0.9" height="0.9" fill="#fff"/>
</g>
<g stroke-linecap="round" stroke-linejoin="round">
<path fill-rule="evenodd" fill="#fb5a02" stroke="#fb5a02" stroke-width="0.8" d="M879.3,157.5 Q880.5,154.2 884.5,152.6 Q894,150.6 904.8,151.6 Q908.6,152.6 910.2,155.6 Q912.4,160 912.8,165.5 Q913.8,171 913.2,177 Q911.5,182 907.2,185.2 Q903,188 898.6,189.2 Q893,188.6 889,186 Q884.6,183.4 882,179.6 Q879.6,175.4 879.2,170 Q878.8,163 879.3,157.5 Z M882,165 Q884,162 887.4,160.6 Q895,159 904,159.6 Q907,162.4 909,166 Q910.2,169.4 909.8,172.6 Q906,176.4 901,179.2 L898,179.8 Q894.4,179 891.4,177.6 Q887.8,176 885,173.4 Q883,169.4 882,165 Z"/>
<path d="M943.4,139 Q937,143.6 932.8,148 Q927,152.8 922.2,157.5 Q917.6,161.8 913.9,166" fill="none" stroke="#e5141e" stroke-width="2.3"/>
<path d="M922.7,149.8 Q917.6,157 914,165.8 Q921,162.6 929.6,160.8" fill="none" stroke="#e5141e" stroke-width="2.3"/>
<path d="M875.8,168.6 H880.8 M878.3,166 V171.2" stroke="#4a431a" stroke-width="0.95" fill="none" stroke-linecap="butt"/>
</g>
<g>
<defs><radialGradient id="vcSh" cx="0.5" cy="0.5" r="0.5"><stop offset="0" stop-color="#9a9a9a" stop-opacity="0.55"/><stop offset="1" stop-color="#9a9a9a" stop-opacity="0"/></radialGradient></defs>
<ellipse cx="1158" cy="109" rx="24" ry="8" fill="url(#vcSh)"/>
<path d="M1141,76.1 L1151.8,69.8 L1178.6,73.2 L1171.2,79.5 Z" fill="#e9e9e9"/>
<path d="M1171.2,79.5 L1178.6,73.2 L1176.9,101.7 L1170.6,110.9 Z" fill="#dadada"/>
<path d="M1141,76.1 L1171.2,79.5 L1170.6,110.9 L1141,105.7 Z" fill="#ededed"/>
<path d="M1146.7,83 L1166,85 L1166,103.4 L1146.7,100.6 Z" fill="#f3f3f5"/>
<g fill="none" stroke="#bdbdbd" stroke-width="0.7" stroke-dasharray="3 2.2">
<path d="M1141,76.1 L1151.8,69.8 L1178.6,73.2 L1176.9,101.7 L1170.6,110.9"/>
<path d="M1141,76.1 L1171.2,79.5 L1170.6,110.9"/><path d="M1171.2,79.5 L1178.6,73.2"/>
</g>
<path d="M1158,72.6 q2.6,-2 5.2,0.2 q-2.4,1.6 -5.2,-0.2 Z" fill="#c9c9c9"/>
<line x1="1140.7" y1="71" x2="1140.7" y2="105.8" stroke="#3d3df0" stroke-width="1.1"/>
<line x1="1140.7" y1="106" x2="1175.7" y2="112.6" stroke="#ef8a8a" stroke-width="0.9"/>
</g>
<g>
<g transform="translate(532.6 557)" fill="none" stroke="#555" stroke-width="0.7"><ellipse rx="5" ry="2.3"/><ellipse rx="2.3" ry="5"/><path d="M-5.6,0 l1.5,-1.3 M-5.6,0 l1.5,1.3 M5.6,0 l-1.5,-1.3 M5.6,0 l-1.5,1.3" /><circle cx="-0.8" cy="-0.4" r="0.9" fill="#2d7fe0" stroke="none"/></g>
<use href="#navArr" x="542.6" y="557.2"/>
<g transform="translate(553 557)"><rect x="-4.6" y="-2" width="9.2" height="6.8" fill="#e6e6e6" stroke="#444" stroke-width="0.8"/><rect x="-2.8" y="0.4" width="5.6" height="2.2" fill="#fff" stroke="#444" stroke-width="0.6"/><path d="M-3.4,-2.2 L-1.6,-4.6 M1.6,-4.6 L3.4,-2.2 M-1.6,-4 H1.6" stroke="#444" stroke-width="0.7" fill="none"/></g>
<g transform="translate(569.7 557)"><path d="M-2.8,0.4 V-3.2 Q-2.2,-4.2 -1.6,-3.2 V-1 V-4.2 Q-0.9,-5.2 -0.2,-4.2 V-1 V-4 Q0.6,-5 1.3,-4 V-0.8 V-3 Q2,-3.9 2.7,-3 V1.6 Q2.6,3.8 1.2,5 H-2 Q-3.4,3.4 -4.8,0.8 Q-4.2,-0.4 -2.8,0.4 Z" fill="#f6f6f6" stroke="#444" stroke-width="0.7" stroke-linejoin="round"/></g>
<g transform="translate(585.7 557)"><circle cx="-1.4" cy="-0.4" r="3" fill="#e4edf5" stroke="#555" stroke-width="0.8"/><path d="M0.8,1.9 L3.6,4.8" stroke="#333" stroke-width="1.4" stroke-linecap="round"/><path d="M2.6,-3.4 h2.4 M3.8,-4.6 v2.4 M2.8,-1.4 h2" stroke="#333" stroke-width="0.6"/></g>
<g transform="translate(602 557)"><rect x="-4.8" y="-4.6" width="8.4" height="8.4" fill="none" stroke="#777" stroke-width="0.5" stroke-dasharray="1 0.8"/><circle cx="-0.8" cy="-0.8" r="3.5" fill="#e4edf5" stroke="#555" stroke-width="0.8"/><path d="M1.8,1.8 L4.8,4.8" stroke="#333" stroke-width="1.4" stroke-linecap="round"/></g>
<use href="#navArr" x="611.9" y="557.2"/>
<g transform="translate(622.7 557)"><rect x="-4.6" y="-4.4" width="9.2" height="7" fill="#6e9fe0" stroke="#555" stroke-width="0.8"/><rect x="-3.4" y="-3.4" width="6.8" height="4.8" fill="#8bb4ea"/><path d="M-1.4,2.8 h2.8 v1 h1.2 v0.9 h-5.2 v-0.9 h1.2 Z" fill="#666"/></g>
<use href="#navArr" x="630.8" y="557.2"/>
<g transform="translate(641.7 557)"><rect x="-4.6" y="-4.6" width="9.2" height="9.2" fill="#9a9a9a" stroke="#555" stroke-width="0.6"/><path d="M-3.07,-4.6 V4.6 M-4.6,-3.07 H4.6" stroke="#555" stroke-width="0.35"/><path d="M-1.53,-4.6 V4.6 M-4.6,-1.53 H4.6" stroke="#555" stroke-width="0.35"/><path d="M0.00,-4.6 V4.6 M-4.6,0.00 H4.6" stroke="#555" stroke-width="0.35"/><path d="M1.53,-4.6 V4.6 M-4.6,1.53 H4.6" stroke="#555" stroke-width="0.35"/><path d="M3.07,-4.6 V4.6 M-4.6,3.07 H4.6" stroke="#555" stroke-width="0.35"/></g>
<use href="#navArr" x="650" y="557.2"/>
<g transform="translate(660.8 557)"><rect x="-4.8" y="-3.6" width="9.6" height="7.4" rx="0.6" fill="#3f6fc0"/><rect x="-3.9" y="-2.8" width="3.5" height="2.6" fill="#8fb3ea"/><rect x="0.4" y="-2.8" width="3.5" height="2.6" fill="#8fb3ea"/><rect x="-3.9" y="0.5" width="3.5" height="2.5" fill="#8fb3ea"/><rect x="0.4" y="0.5" width="3.5" height="2.5" fill="#8fb3ea"/></g>
<use href="#navArr" x="669.5" y="557.2"/>
</g>
<defs><radialGradient id="rx" cx="0.4" cy="0.35" r="0.7"><stop offset="0" stop-color="#e8373a"/><stop offset="1" stop-color="#a00d10"/></radialGradient></defs>
<circle cx="1187" cy="557.2" r="5" fill="url(#rx)"/><path d="M1185.3,555.5 L1188.7,558.9 M1188.7,555.5 L1185.3,558.9" stroke="#fff" stroke-width="1.2" stroke-linecap="round"/>
<g fill="#3a3a3a">
<rect x="6.5" y="579" width="1.3" height="8.5"/><path d="M14.5,579 V587.5 L8,583.25 Z"/>
<path d="M28.5,580 V586.5 L22,583.25 Z"/><rect x="28.8" y="581" width="1.2" height="4.5"/>
<path d="M38,578.5 V588 L45.5,583.25 Z"/>
<rect x="53" y="581" width="1.2" height="4.5"/><path d="M54.5,580 V586.5 L61,583.25 Z"/>
<path d="M69,579 V587.5 L75.5,583.25 Z"/><rect x="75.7" y="579" width="1.3" height="8.5"/>
</g>
<path d="M96.5,590 V593.5 H306.5 M111.5,590 V593.5 M126.5,590 V593.5 M141.5,590 V593.5 M156.5,590 V593.5 M171.5,590 V593.5 M186.5,590 V593.5 M201.5,590 V593.5 M216.5,590 V593.5 M231.5,590 V593.5 M246.5,590 V593.5 M261.5,590 V593.5 M276.5,590 V593.5 M291.5,590 V593.5 M306.5,590 V593.5" fill="none" stroke="#c6c6c6" stroke-width="0.7"/>
<use href="#tlSketch" x="96" y="582.5"/>
<use href="#tlRevolve" x="111" y="582.5"/>
<use href="#tlConstruct" x="126" y="582.5"/>
<use href="#tlSketch" x="141" y="582.5"/>
<use href="#tlExtrude" x="156" y="582.5"/>
<use href="#tlHole" x="171" y="582.5"/>
<use href="#tlHole" x="186" y="582.5"/>
<g transform="translate(201.6 582.5)" fill="#3f9df0"><circle cx="0.00" cy="-3.60" r="1.05" fill="#3f9df0"/><circle cx="3.12" cy="-1.80" r="1.05" fill="#3f9df0"/><circle cx="3.12" cy="1.80" r="1.05" fill="#3f9df0"/><circle cx="0.00" cy="3.60" r="1.05" fill="#3f9df0"/><circle cx="-3.12" cy="1.80" r="1.05" fill="#3f9df0"/><circle cx="-3.12" cy="-1.80" r="1.05" fill="#888"/></g>
<g transform="translate(216 582.5)"><path d="M-4.6,0.6 H0.6 V4.6 H-4.6 Z" fill="#d8d8d8" stroke="#8a8a8a" stroke-width="0.5"/><path d="M0.2,-5 L5,-0.4 L0.6,4 L-4,-0.6 Z" fill="#e39a5c" stroke="#c27a3e" stroke-width="0.4"/><circle cx="0.8" cy="-0.4" r="1.3" fill="#e9f7ea" stroke="#3aa85a" stroke-width="0.5"/></g>
<use href="#tlSketch" x="231" y="582.5"/>
<g transform="translate(246 582.5)"><path d="M-4.6,3.6 Q-3.6,-3.4 4.4,-4.4 Q3.6,3 -4.6,3.6 Z" fill="#e39a5c" stroke="#8a8a8a" stroke-width="0.5"/><path d="M-3.8,1.6 Q0,-3.6 3.8,-2.4 M-3.8,2.6 Q0.6,3.2 3.8,-2.4" fill="none" stroke="#777" stroke-width="0.5"/><circle cx="0.2" cy="-0.2" r="1.3" fill="#e9f7ea" stroke="#3aa85a" stroke-width="0.5"/><rect x="3.6" y="-5.4" width="1.6" height="1.6" fill="#27b04f"/><rect x="-5.4" y="3.6" width="1.6" height="1.6" fill="#27b04f"/></g>
<use href="#tlSketch" x="261" y="582.5"/>
<use href="#tlExtrude" x="276" y="582.5"/>
<use href="#tlHole" x="291" y="582.5"/>
<rect x="298.8" y="575.2" width="14.8" height="14.8" rx="0.8" fill="#f03b3e"/>
<g transform="translate(301.2 577.6)" stroke-linejoin="round"><path d="M0,2.4 L2.2,0 H5 Q9.8,1 10,6 V8.4 L7.6,10.4 H0.6 Q0,10.4 0,9.8 Z" fill="#dcdcdc" stroke="#9a9a9a" stroke-width="0.5"/><path d="M4.4,1.4 L5.4,0 Q9.8,1 10,6.2 L8.2,7 Q7.8,2.6 4.4,1.4 Z" fill="#4fa3e3"/></g>
<path d="M309.9,574.1 H317.4 L314.4,578.2 H312.9 Z" fill="#4a4a4a"/><rect x="313.1" y="578" width="1.1" height="15.8" fill="#4a4a4a"/>
<g transform="translate(1187 583.1)" fill="#8e8e8e"><rect x="-1.2" y="-5.2" width="2.4" height="2.8" transform="rotate(0)"/><rect x="-1.2" y="-5.2" width="2.4" height="2.8" transform="rotate(45)"/><rect x="-1.2" y="-5.2" width="2.4" height="2.8" transform="rotate(90)"/><rect x="-1.2" y="-5.2" width="2.4" height="2.8" transform="rotate(135)"/><rect x="-1.2" y="-5.2" width="2.4" height="2.8" transform="rotate(180)"/><rect x="-1.2" y="-5.2" width="2.4" height="2.8" transform="rotate(225)"/><rect x="-1.2" y="-5.2" width="2.4" height="2.8" transform="rotate(270)"/><rect x="-1.2" y="-5.2" width="2.4" height="2.8" transform="rotate(315)"/><circle r="3.6"/><circle r="1.8" fill="#f2f2f2"/></g>
<circle cx="6.5" cy="605.9" r="2.8" fill="#1e1e1e"/><path d="M4.9,605.9 H8.1 M6.5,604.3 V607.5" stroke="#fff" stroke-width="0.8"/>
</svg>

<div id="texts">
<span class="t" id="t0" style="left:26.3px;top:18.83px;font-size:6.88px;line-height:9.63px;color:#222;font-weight:700;transform:scaleX(0.832);">デザイン</span>
<span class="t" id="t1" style="left:93.3px;top:1.44px;font-size:6.02px;line-height:8.43px;color:#0696d7;font-weight:700;transform:scaleX(0.831);">ソリッド</span>
<span class="t" id="t2" style="left:142.2px;top:1.44px;font-size:6.02px;line-height:8.43px;color:#444;font-weight:500;transform:scaleX(0.824);">サーフェス</span>
<span class="t" id="t3" style="left:196.7px;top:1.44px;font-size:6.02px;line-height:8.43px;color:#444;font-weight:500;transform:scaleX(0.761);">メッシュ</span>
<span class="t" id="t4" style="left:243.0px;top:1.44px;font-size:6.02px;line-height:8.43px;color:#444;font-weight:500;transform:scaleX(0.869);">シート メタル</span>
<span class="t" id="t5" style="left:304.2px;top:1.44px;font-size:6.02px;line-height:8.43px;color:#444;font-weight:500;transform:scaleX(0.859);">ツール</span>
<span class="t" id="t6" style="left:151.2px;top:39.24px;font-size:6.02px;line-height:8.43px;color:#333;font-weight:500;transform:scaleX(1.081);">作成</span>
<span class="t" id="t7" style="left:319.2px;top:39.24px;font-size:6.02px;line-height:8.43px;color:#333;font-weight:500;transform:scaleX(1.039);">修正</span>
<span class="t" id="t8" style="left:428.3px;top:39.24px;font-size:6.02px;line-height:8.43px;color:#333;font-weight:500;transform:scaleX(0.839);">アセンブリ</span>
<span class="t" id="t9" style="left:483.3px;top:39.24px;font-size:6.02px;line-height:8.43px;color:#333;font-weight:500;transform:scaleX(1.114);">構築</span>
<span class="t" id="t10" style="left:520.0px;top:39.24px;font-size:6.02px;line-height:8.43px;color:#333;font-weight:500;transform:scaleX(1.105);">検査</span>
<span class="t" id="t11" style="left:557.3px;top:39.24px;font-size:6.02px;line-height:8.43px;color:#333;font-weight:500;transform:scaleX(1.114);">挿入</span>
<span class="t" id="t12" style="left:594.0px;top:39.24px;font-size:6.02px;line-height:8.43px;color:#333;font-weight:500;transform:scaleX(1.105);">選択</span>
<span class="t" id="t13" style="left:18.0px;top:55.54px;font-size:6.02px;line-height:8.43px;color:#444;font-weight:500;transform:scaleX(0.831);">ブラウザ</span>
<span class="t" id="t14" style="left:61.7px;top:72.94px;font-size:6.45px;line-height:9.03px;color:#fff;font-weight:700;transform:scaleX(1.025);">MODEL_MANIA_2000_2021061...</span>
<span class="t" id="t15" style="left:57.0px;top:87.64px;font-size:6.45px;line-height:9.03px;color:#333;font-weight:500;transform:scaleX(0.833);">ドキュメントの設定</span>
<span class="t" id="t16" style="left:56.0px;top:102.23px;font-size:6.45px;line-height:9.03px;color:#333;font-weight:500;transform:scaleX(0.885);">ビュー管理</span>
<span class="t" id="t17" style="left:71.7px;top:117.14px;font-size:6.45px;line-height:9.03px;color:#333;font-weight:500;transform:scaleX(1.040);">原点</span>
<span class="t" id="t18" style="left:71.7px;top:132.24px;font-size:6.45px;line-height:9.03px;color:#333;font-weight:500;transform:scaleX(0.821);">ボディ</span>
<span class="t" id="t19" style="left:71.7px;top:147.03px;font-size:6.45px;line-height:9.03px;color:#333;font-weight:500;transform:scaleX(0.734);">スケッチ</span>
<span class="t" id="t20" style="left:71.7px;top:162.13px;font-size:6.45px;line-height:9.03px;color:#333;font-weight:500;transform:scaleX(0.775);">コンストラクション</span>
<span class="t" id="t21" style="left:878.5px;top:73.94px;font-size:6.02px;line-height:8.43px;color:#444;font-weight:500;transform:scaleX(0.870);">フィーチャ編集</span>
<span class="t" id="t22" style="left:870.8px;top:91.44px;font-size:6.45px;line-height:9.03px;color:#333;font-weight:500;transform:scaleX(0.786);">タイプ</span>
<span class="t" id="t23" style="left:942.0px;top:91.44px;font-size:6.45px;line-height:9.03px;color:#333;font-weight:500;transform:scaleX(0.671);">フィレット</span>
<span class="t" id="t24" style="left:870.8px;top:185.44px;font-size:6.45px;line-height:9.03px;color:#333;font-weight:500;transform:scaleX(0.876);">半径タイプ</span>
<span class="t" id="t25" style="left:943.0px;top:185.44px;font-size:6.45px;line-height:9.03px;color:#333;font-weight:500;transform:scaleX(0.931);">一定</span>
<span class="t" id="t26" style="left:870.8px;top:204.34px;font-size:6.45px;line-height:9.03px;color:#333;font-weight:500;transform:scaleX(0.786);">エッジ/面/フィーチャ</span>
<span class="t" id="t27" style="left:941.0px;top:204.34px;font-size:6.45px;line-height:9.03px;color:#fff;font-weight:500;transform:scaleX(0.970);">選択</span>
<span class="t" id="t28" style="left:870.8px;top:222.94px;font-size:6.45px;line-height:9.03px;color:#333;font-weight:500;transform:scaleX(0.893);">接面チェーン</span>
<span class="t" id="t29" style="left:870.8px;top:247.94px;font-size:6.45px;line-height:9.03px;color:#333;font-weight:500;transform:scaleX(0.819);">コーナーのタイプ</span>
<span class="t" id="t30" style="left:942.0px;top:247.94px;font-size:6.45px;line-height:9.03px;color:#333;font-weight:500;transform:scaleX(0.807);">ローリング ボール</span>
<span class="t" id="t31" style="left:1037.5px;top:269.54px;font-size:6.45px;line-height:9.03px;color:#c4c4c4;font-weight:500;transform:scaleX(1.128);">OK</span>
<span class="t" id="t32" style="left:1071.5px;top:269.54px;font-size:6.45px;line-height:9.03px;color:#333;font-weight:500;transform:scaleX(0.963);">キャンセル</span>
<span class="t" id="t33" style="left:18.0px;top:552.24px;font-size:6.02px;line-height:8.43px;color:#444;font-weight:500;transform:scaleX(0.790);">コメント</span>
<span class="t" id="t34" style="left:15.0px;top:601.74px;font-size:6.02px;line-height:8.43px;color:#444;font-weight:500;transform:scaleX(0.866);">テキスト コマンド</span>
<span class="t" id="t35" style="left:1138.1px;top:59.73px;font-size:8.60px;line-height:12.04px;color:#5a5af0;font-weight:400;transform:scaleX(0.971);">Z</span>
<span class="t" id="t36" style="left:1178.0px;top:107.63px;font-size:8.60px;line-height:12.04px;color:#f08080;font-weight:400;transform:scaleX(0.802);">X</span>
<span class="t" id="t37" style="left:1147.2px;top:82.15px;font-size:14.50px;line-height:20.30px;color:#9a9a9a;font-weight:600;transform:scaleX(1.262);font-family:"Liberation Serif","Noto Serif CJK SC",serif;">前</span>
</div>
</body></html>
